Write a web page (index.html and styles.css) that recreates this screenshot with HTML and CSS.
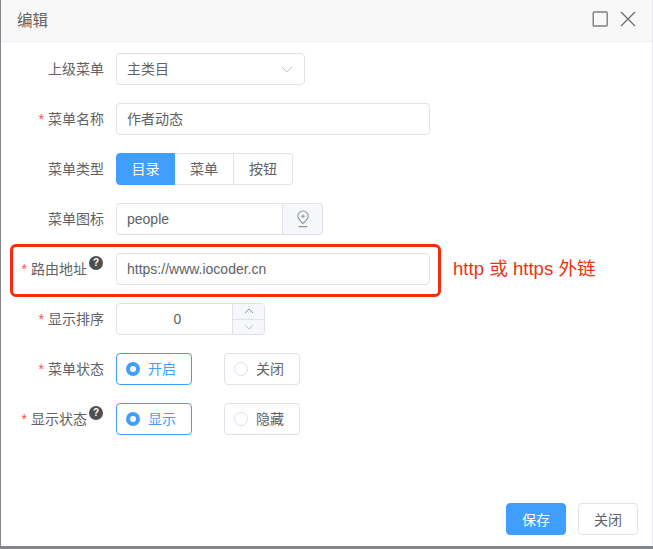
FILE: index.html
```html
<!DOCTYPE html>
<html lang="zh">
<head>
<meta charset="utf-8">
<title>编辑</title>
<link rel="stylesheet" href="styles.css">
</head>
<body>
<div class="dialog">
  <header class="head">
    <span class="title">编辑</span>
    <div class="tools">
      <svg class="tool" width="16" height="16" viewBox="0 0 16 16"><rect x="1.2" y="1" width="14" height="14" rx="1" fill="none" stroke="#7d7d7d" stroke-width="1.4"/></svg>
      <svg class="tool" width="16" height="16" viewBox="0 0 16 16"><path d="M1 1l14 14M15 1L1 15" fill="none" stroke="#6c6c6c" stroke-width="1.3"/></svg>
    </div>
  </header>
  <form class="form">
    <div class="row">
      <label class="label">上级菜单</label>
      <div class="box select"><span>主类目</span>
        <svg width="12" height="7" viewBox="0 0 12 7"><path d="M1 1l5 5 5-5" fill="none" stroke="#bfc2c9" stroke-width="1"/></svg>
      </div>
    </div>
    <div class="row">
      <label class="label req">菜单名称</label>
      <div class="box wide">作者动态</div>
    </div>
    <div class="row">
      <label class="label">菜单类型</label>
      <div class="seg">
        <span class="seg-item on">目录</span><span class="seg-item">菜单</span><span class="seg-item">按钮</span>
      </div>
    </div>
    <div class="row">
      <label class="label">菜单图标</label>
      <div class="group">
        <div class="group-text">people</div>
        <div class="append">
          <svg width="14" height="18" viewBox="0 0 14 18"><path d="M7 13.6C4 10.8 1.8 8.8 1.8 6.2a5.2 5.2 0 0 1 10.4 0c0 2.6-2.2 4.6-5.2 7.4zM7 4.4v3.6M5.2 6.2h3.6M2.6 16.6h8.8" fill="none" stroke="#909399" stroke-width="1.1"/></svg>
        </div>
      </div>
    </div>
    <div class="row">
      <label class="label req">路由地址<i class="help">?</i></label>
      <div class="box wide">https://www.iocoder.cn</div>
    </div>
    <div class="row">
      <label class="label req">显示排序</label>
      <div class="number">
        <div class="num-val">0</div>
        <div class="num-ctl">
          <span class="num-btn"><svg width="10" height="6" viewBox="0 0 10 6"><path d="M1 5l4-4 4 4" fill="none" stroke="#8f939b" stroke-width="1"/></svg></span>
          <span class="num-btn num-down"><svg width="10" height="6" viewBox="0 0 10 6"><path d="M1 1l4 4 4-4" fill="none" stroke="#c0c4cc" stroke-width="1"/></svg></span>
        </div>
      </div>
    </div>
    <div class="row">
      <label class="label req">菜单状态</label>
      <div class="radios">
        <span class="radio on"><i class="dot"></i>开启</span>
        <span class="radio"><i class="dot"></i>关闭</span>
      </div>
    </div>
    <div class="row">
      <label class="label req">显示状态<i class="help">?</i></label>
      <div class="radios">
        <span class="radio on"><i class="dot"></i>显示</span>
        <span class="radio"><i class="dot"></i>隐藏</span>
      </div>
    </div>
  </form>
  <footer class="foot">
    <button type="button" class="btn primary">保存</button>
    <button type="button" class="btn">关闭</button>
  </footer>
  <div class="mark"></div>
  <div class="note">http 或 https 外链</div>
</div>
</body>
</html>
```

FILE: styles.css
```css
* { box-sizing: border-box; }
html, body { margin: 0; height: 100%; }
body {
  background: #85858c;
  padding: 0 0 3px 1px;
  overflow: hidden;
  font-family: "Liberation Sans", "Noto Sans CJK SC", sans-serif;
  font-size: 14px;
  color: #606266;
}
.dialog {
  position: relative;
  height: 546px;
  background: #fff;
  display: flex;
  flex-direction: column;
  border-right: 1px solid #e8e8f2;
}
.head {
  height: 41.5px;
  flex: none;
  display: flex;
  align-items: center;
  justify-content: space-between;
  padding: 0 16px 3px 16px;
  background: #f8f8f9;
  border-bottom: 1px solid #ebeef5;
}
.title { font-size: 15.5px; color: #606266; }
.tools { display: flex; gap: 12px; }
.form { flex: 1; padding: 11.5px 0 0 0; }
.row { display: flex; height: 32px; margin-bottom: 18px; align-items: stretch; }
.label {
  width: 115px;
  flex: none;
  padding-right: 12px;
  text-align: right;
  line-height: 32px;
  position: relative;
  white-space: nowrap;
}
.req::before { content: "*"; color: #ff4949; margin-right: 4px; }
.help {
  position: absolute;
  right: 13px;
  top: 3px;
  width: 14px;
  height: 14px;
  border-radius: 50%;
  background: #4f4f52;
  color: #fff;
  font: bold 10px/14px "Liberation Sans", sans-serif;
  text-align: center;
}
.label:has(.help) { padding-right: 29px; }
.box {
  border: 1px solid #e0e2ea;
  border-radius: 4px;
  padding: 0 10px;
  line-height: 30px;
  background: #fff;
}
.wide { width: 314px; }
.select {
  width: 189px;
  display: flex;
  align-items: center;
  justify-content: space-between;
  padding-right: 11px;
}
.seg { display: flex; }
.seg-item {
  width: 59px;
  line-height: 30px;
  text-align: center;
  border: 1px solid #e0e2ea;
  border-left: 0;
}
.seg-item:first-child { border: 1px solid #409eff; background: #409eff; color: #fff; border-radius: 4px 0 0 4px; }
.seg-item:last-child { border-radius: 0 4px 4px 0; }
.group { display: flex; width: 207px; }
.group-text {
  flex: 1;
  border: 1px solid #e0e2ea;
  border-radius: 4px 0 0 4px;
  padding: 0 10px;
  line-height: 30px;
}
.append {
  width: 40px;
  border: 1px solid #e0e2ea;
  border-left: 0;
  border-radius: 0 4px 4px 0;
  background: #f5f7fa;
  display: flex;
  align-items: center;
  justify-content: center;
}
.number {
  width: 149px;
  display: flex;
  border: 1px solid #e0e2ea;
  border-radius: 4px;
  overflow: hidden;
}
.num-val { flex: 1; text-align: center; line-height: 30px; padding-left: 6px; }
.num-ctl {
  width: 32px;
  display: flex;
  flex-direction: column;
  border-left: 1px solid #e0e2ea;
  background: #f5f7fa;
}
.num-btn { flex: 1; display: flex; align-items: center; justify-content: center; }
.num-down { border-top: 1px solid #e0e2ea; }
.radios { display: flex; gap: 32px; }
.radio {
  width: 76px;
  border: 1px solid #e0e2ea;
  border-radius: 4px;
  display: flex;
  align-items: center;
  padding-left: 9px;
  gap: 8px;
  line-height: 30px;
}
.dot {
  width: 14px;
  height: 14px;
  border: 1px solid #e0e2ea;
  border-radius: 50%;
  background: #fff;
  flex: none;
}
.radio.on { border-color: #409eff; color: #409eff; }
.radio.on .dot { border: 4.5px solid #409eff; }
.foot {
  flex: none;
  display: flex;
  justify-content: flex-end;
  gap: 12px;
  padding: 0 14px 11px 0;
}
.btn {
  width: 60px;
  height: 32px;
  padding: 0;
  border: 1px solid #e0e2ea;
  border-radius: 4px;
  background: #fff;
  color: #606266;
  font: inherit;
}
.btn.primary { background: #409eff; border-color: #409eff; color: #fff; }
.mark {
  position: absolute;
  left: 9px;
  top: 244px;
  width: 431px;
  height: 53px;
  border: 3px solid #fa2a0c;
  border-radius: 6px;
}
.note {
  position: absolute;
  left: 452px;
  top: 258px;
  font-size: 18.6px;
  line-height: 22px;
  color: #f5300f;
  white-space: nowrap;
}
```
